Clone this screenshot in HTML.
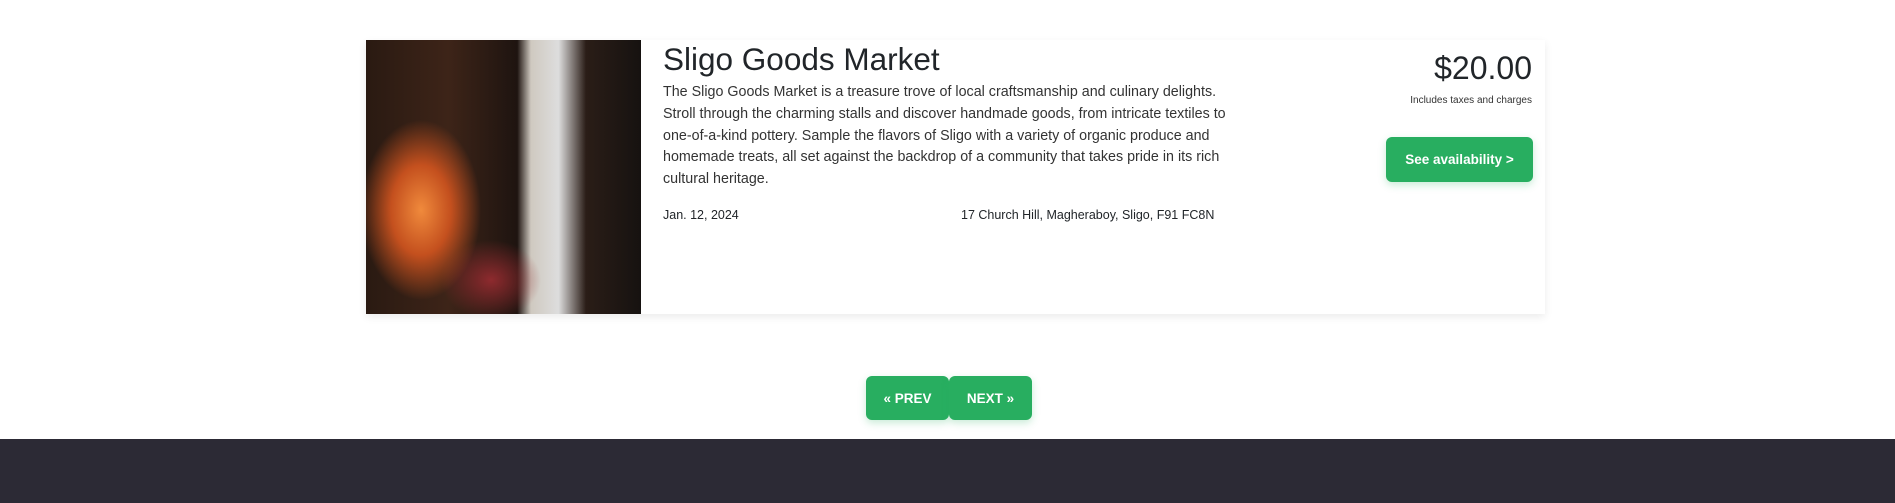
<!DOCTYPE html>
<html><head><style>
body{margin:0;width:1895px;height:503px;background:#fff;font-family:"Liberation Sans",sans-serif;position:relative;overflow:hidden;color:#212529}
.card{position:absolute;left:366px;top:40px;width:1179px;height:274px;background:#fff;box-shadow:0 3px 8px rgba(0,0,0,.08)}
.img{position:absolute;left:0;top:0;width:275px;height:274px;background:radial-gradient(ellipse 60px 90px at 55px 170px,#f08a3c,#c4501e 50%,transparent 100%),radial-gradient(ellipse 50px 40px at 125px 240px,#8e2a2e,transparent),linear-gradient(90deg,#2a1a12 0,#3d2418 30%,#1e1410 55%,#cfc9c0 60%,#ddd 70%,#2a1d17 80%,#161210 100%)}
h1{position:absolute;left:297px;margin:0;font-size:31.5px;font-weight:normal;line-height:40px;top:-1px}
.desc{position:absolute;left:297px;top:42px;white-space:nowrap;font-size:14.3px;line-height:21.8px;color:#333}
.date{position:absolute;left:297px;top:168px;font-size:12.5px}
.addr{position:absolute;left:595px;top:168px;font-size:12.5px}
.price{position:absolute;right:13px;top:10px;font-size:32px}
.inc{position:absolute;right:13px;top:55px;font-size:10px;color:#333}
.btn{position:absolute;background:#28ae60;color:#fff;font-weight:bold;font-size:13.5px;border-radius:6px;display:flex;align-items:center;justify-content:center;box-shadow:0 3px 8px rgba(40,174,96,.25)}
footer{position:absolute;left:0;top:439px;width:1895px;height:64px;background:#2c2a35}
</style></head><body>
<div class="card">
<div class="img"></div>
<h1>Sligo Goods Market</h1>
<div class="desc">The Sligo Goods Market is a treasure trove of local craftsmanship and culinary delights.<br>Stroll through the charming stalls and discover handmade goods, from intricate textiles to<br>one-of-a-kind pottery. Sample the flavors of Sligo with a variety of organic produce and<br>homemade treats, all set against the backdrop of a community that takes pride in its rich<br>cultural heritage.</div>
<div class="date">Jan. 12, 2024</div>
<div class="addr">17 Church Hill, Magheraboy, Sligo, F91 FC8N</div>
<div class="price">$20.00</div>
<div class="inc">Includes taxes and charges</div>
</div>
<div class="btn" style="left:1386px;top:137px;width:147px;height:45px">See availability &gt;</div>
<div class="btn" style="left:866px;top:376px;width:83px;height:44px">« PREV</div>
<div class="btn" style="left:949px;top:376px;width:83px;height:44px">NEXT »</div>
<footer></footer>
</body></html>
